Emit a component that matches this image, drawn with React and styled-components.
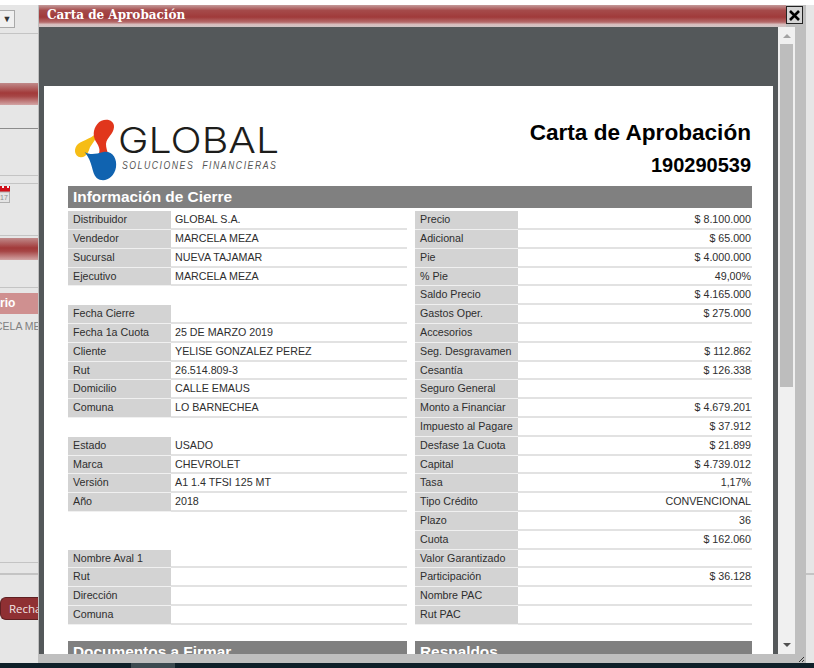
import React from 'react';
import styled, { createGlobalStyle } from 'styled-components';

const GlobalStyle = createGlobalStyle`
    html, body, #root {
        margin: 0;
        padding: 0;
        height: 100%;
        overflow: hidden;
    }
    body {
        font-family: "Liberation Sans", Arial, sans-serif;
        background: #ffffff;
    }
`;

const leftRows = [
    ['Distribuidor', 'GLOBAL S.A.'],
    ['Vendedor', 'MARCELA MEZA'],
    ['Sucursal', 'NUEVA TAJAMAR'],
    ['Ejecutivo', 'MARCELA MEZA'],
    null,
    ['Fecha Cierre', ''],
    ['Fecha 1a Cuota', '25 DE MARZO 2019'],
    ['Cliente', 'YELISE GONZALEZ PEREZ'],
    ['Rut', '26.514.809-3'],
    ['Domicilio', 'CALLE EMAUS'],
    ['Comuna', 'LO BARNECHEA'],
    null,
    ['Estado', 'USADO'],
    ['Marca', 'CHEVROLET'],
    ['Versión', 'A1 1.4 TFSI 125 MT'],
    ['Año', '2018'],
    null,
    null,
    ['Nombre Aval 1', ''],
    ['Rut', ''],
    ['Dirección', ''],
    ['Comuna', ''],
];

const rightRows = [
    ['Precio', '$ 8.100.000'],
    ['Adicional', '$ 65.000'],
    ['Pie', '$ 4.000.000'],
    ['% Pie', '49,00%'],
    ['Saldo Precio', '$ 4.165.000'],
    ['Gastos Oper.', '$ 275.000'],
    ['Accesorios', ''],
    ['Seg. Desgravamen', '$ 112.862'],
    ['Cesantía', '$ 126.338'],
    ['Seguro General', ''],
    ['Monto a Financiar', '$ 4.679.201'],
    ['Impuesto al Pagare', '$ 37.912'],
    ['Desfase 1a Cuota', '$ 21.899'],
    ['Capital', '$ 4.739.012'],
    ['Tasa', '1,17%'],
    ['Tipo Crédito', 'CONVENCIONAL'],
    ['Plazo', '36'],
    ['Cuota', '$ 162.060'],
    ['Valor Garantizado', ''],
    ['Participación', '$ 36.128'],
    ['Nombre PAC', ''],
    ['Rut PAC', ''],
];

function GlobalLogo() {
    return (
        <LogoMark viewBox="0 0 180 210">
            <path
                fill="#f6bd16"
                d="M82 52 C72 72 40 78 24 90 C10 102 12 128 32 130 C50 131 56 112 60 100 L76 76 Z"
            />
            <path
                fill="#e1361c"
                d="M82 30 C98 10 134 14 132 40 C130 62 110 70 108 90 C108 102 112 110 114 120 L86 120 C92 108 86 96 80 86 C68 68 68 48 82 30 Z"
            />
            <path
                fill="#1063b0"
                d="M44 114 C60 124 78 120 100 114 C128 110 142 135 138 160 C132 195 100 208 80 192 C64 176 70 146 44 114 Z"
            />
        </LogoMark>
    );
}

function DataRow({ row, right }) {
    if (!row) {
        return <BlankRow />;
    }

    return (
        <Row>
            <RowLabel>{row[0]}</RowLabel>
            <RowValue right={right}>{row[1]}</RowValue>
        </Row>
    );
}

export default function App() {
    return (
        <Screen>
            <GlobalStyle />
            <TopStrip />

            <BackPanel>
                <SelectBox>▼</SelectBox>
                <PanelLine gap="5px" />
                <RedBand gap="49px" />
                <PanelLine gap="23px" dark />
                <PanelLine gap="46px" />
                <PanelLine gap="7px" />
                <CalendarIcon viewBox="0 0 10 17">
                    <rect x="-3" y="0" width="13" height="6" fill="#d0101a" />
                    <rect x="2" y="0" width="2" height="2" fill="#f4f4f4" />
                    <rect x="7" y="0" width="2" height="2" fill="#f4f4f4" />
                    <rect x="-3" y="6" width="12.5" height="10.5" fill="#e4e4e4" stroke="#b0b0b0" />
                    <text x="0" y="14" fontSize="7" fill="#8c8c8c" fontFamily="Liberation Sans">17</text>
                </CalendarIcon>
                <PanelLine gap="32px" />
                <RedBand gap="2px" />
                <PanelLine gap="27px" />
                <PinkBand>rio</PinkBand>
                <PanelText>CELA ME</PanelText>
                <PanelLine gap="229px" />
                <PanelLine gap="10px" thick />
                <RejectButton>Recha</RejectButton>
            </BackPanel>

            <Dialog>
                <TitleRow>
                    <TitleBar>Carta de Aprobación</TitleBar>
                    <CloseButton>
                        <svg width="13" height="13" viewBox="0 0 13 13">
                            <path d="M2 2 L11 11 M11 2 L2 11" stroke="#000" strokeWidth="2.6" />
                        </svg>
                    </CloseButton>
                </TitleRow>

                <DialogBody>
                    <Viewer>
                        <Paper>
                            <PaperHead>
                                <LogoBlock>
                                    <GlobalLogo />
                                    <LogoWords>
                                        <LogoName>GLOBAL</LogoName>
                                        <LogoTag>SOLUCIONES  FINANCIERAS</LogoTag>
                                    </LogoWords>
                                </LogoBlock>
                                <HeadTitles>
                                    <DocTitle>Carta de Aprobación</DocTitle>
                                    <DocNumber>190290539</DocNumber>
                                </HeadTitles>
                            </PaperHead>

                            <SectionHead>Información de Cierre</SectionHead>
                            <Columns>
                                <Column>
                                    {leftRows.map((row, i) => (
                                        <DataRow key={i} row={row} />
                                    ))}
                                </Column>
                                <Column>
                                    {rightRows.map((row, i) => (
                                        <DataRow key={i} row={row} right />
                                    ))}
                                </Column>
                            </Columns>

                            <BottomColumns>
                                <SectionHead>Documentos a Firmar</SectionHead>
                                <SectionHead>Respaldos</SectionHead>
                            </BottomColumns>
                        </Paper>
                    </Viewer>

                    <ScrollBar>
                        <ScrollArrow up />
                        <ScrollTrack>
                            <ScrollThumb />
                        </ScrollTrack>
                        <ScrollArrow />
                    </ScrollBar>
                </DialogBody>

                <DialogFoot>
                    <svg width="7" height="7" viewBox="0 0 7 7">
                        <path d="M6 1 L1 6 M6 4 L4 6" stroke="#333" strokeWidth="1" />
                    </svg>
                </DialogFoot>
            </Dialog>

            <BackEdge>
                <PanelLine gap="568px" thick />
            </BackEdge>

            <TaskBar>
                <TaskItem />
            </TaskBar>
        </Screen>
    );
}

const Screen = styled.div`
    width: 814px;
    height: 668px;
    display: grid;
    grid-template-columns: 38px 768px 8px;
    grid-template-rows: 5px 658px 5px;
    overflow: hidden;
`;

const TopStrip = styled.div`
    grid-column: 1 / 4;
    background: #ffffff;
`;

const BackPanel = styled.div`
    background: #e6e6e6;
    display: flex;
    flex-direction: column;
    overflow: hidden;
`;

const BackEdge = styled.div`
    background: #e6e6e6;
    display: flex;
    flex-direction: column;
`;

const SelectBox = styled.div`
    margin-top: 5px;
    width: 15px;
    height: 18px;
    box-sizing: border-box;
    background: #f0f0f0;
    border: 1px solid #a9a9a9;
    border-left: none;
    color: #333333;
    font-size: 9px;
    line-height: 16px;
    text-align: center;
`;

const PanelLine = styled.div`
    margin-top: ${({ gap }) => gap};
    flex-shrink: 0;
    height: ${({ thick }) => (thick ? '2px' : '1px')};
    background: ${({ dark }) => (dark ? '#8c8c8c' : '#c4c4c4')};
`;

const RedBand = styled.div`
    margin-top: ${({ gap }) => gap};
    flex-shrink: 0;
    height: 22px;
    background: linear-gradient(#c08a8a 0%, #a23a3a 45%, #a64545 60%, #d3a5a5 100%);
`;

const CalendarIcon = styled.svg`
    margin-top: 2px;
    width: 10px;
    height: 17px;
    flex-shrink: 0;
`;

const PinkBand = styled.div`
    margin-top: 5px;
    flex-shrink: 0;
    height: 21px;
    background: #cf9090;
    color: #ffffff;
    font-size: 12px;
    font-weight: bold;
    line-height: 21px;
`;

const PanelText = styled.div`
    margin-top: 5px;
    margin-left: -5px;
    color: #808080;
    font-size: 10.5px;
    line-height: 14px;
    white-space: nowrap;
`;

const RejectButton = styled.div`
    margin-top: 22px;
    flex-shrink: 0;
    height: 23px;
    box-sizing: border-box;
    padding-left: 8px;
    background: #8f3033;
    border: 1px solid #5e2022;
    border-right: none;
    border-radius: 6px 0 0 6px;
    color: #f2e4e4;
    font-family: "Open Sans", sans-serif;
    font-size: 11.5px;
    line-height: 21px;
    white-space: nowrap;
    overflow: hidden;
`;

const Dialog = styled.div`
    background: #bfbfbf;
    display: flex;
    flex-direction: column;
    min-height: 0;
`;

const TitleRow = styled.div`
    height: 22px;
    flex-shrink: 0;
    position: relative;
    display: flex;
`;

const TitleBar = styled.div`
    flex: 1;
    margin-left: 1px;
    margin-right: 20px;
    padding-left: 8px;
    background: linear-gradient(#c49a9a 0%, #a54a4a 25%, #a03a3a 55%, #b56a6a 78%, #d8bcbc 88%, #cfc4c4 100%);
    color: #ffffff;
    font-family: "DejaVu Serif", serif;
    font-size: 12px;
    font-weight: bold;
    line-height: 20px;
`;

const CloseButton = styled.div`
    position: absolute;
    top: 1px;
    right: 3px;
    width: 17px;
    height: 18px;
    box-sizing: border-box;
    background: #d4d4d4;
    border: 1px solid #222222;
    display: flex;
    align-items: center;
    justify-content: center;
`;

const DialogBody = styled.div`
    flex: 1;
    min-height: 0;
    display: flex;
    margin-left: 1px;
    margin-right: 11px;
`;

const Viewer = styled.div`
    flex: 1;
    min-width: 0;
    overflow: hidden;
    background: #54585a;
    padding: 59px 5px 0;
`;

const Paper = styled.div`
    background: #ffffff;
    padding: 0 21px 0 24px;
    height: 900px;
    color: #333333;
`;

const PaperHead = styled.div`
    height: 100px;
    display: flex;
    justify-content: space-between;
    padding-right: 1px;
`;

const LogoBlock = styled.div`
    display: flex;
    padding-top: 28px;
    margin-left: 2px;
`;

const LogoMark = styled.svg`
    width: 60px;
    height: 70px;
    flex-shrink: 0;
`;

const LogoWords = styled.div`
    margin-left: -12px;
    margin-top: 8px;
`;

const LogoName = styled.div`
    color: #1d1d1b;
    font-family: Inter, sans-serif;
    font-size: 36px;
    font-weight: 350;
    line-height: 36px;
    transform: scaleX(1.14);
    transform-origin: left center;
`;

const LogoTag = styled.div`
    margin-left: 4px;
    margin-top: 2px;
    color: #555555;
    font-size: 10px;
    font-style: italic;
    line-height: 12px;
    letter-spacing: 1.75px;
    white-space: pre;
    transform: scaleX(0.87);
    transform-origin: left center;
`;

const HeadTitles = styled.div`
    text-align: right;
    color: #000000;
    font-weight: bold;
    padding-top: 34px;
`;

const DocTitle = styled.div`
    font-size: 22.6px;
    line-height: 26px;
`;

const DocNumber = styled.div`
    margin-top: 6px;
    font-size: 20px;
    line-height: 26px;
`;

const SectionHead = styled.div`
    height: 22px;
    padding-left: 5px;
    background: #808080;
    color: #ffffff;
    font-size: 15.4px;
    font-weight: bold;
    line-height: 22px;
`;

const Columns = styled.div`
    margin-top: 3.3px;
    display: grid;
    grid-template-columns: 339px 337px;
    column-gap: 8px;
`;

const Column = styled.div`
    display: flex;
    flex-direction: column;
`;

const BlankRow = styled.div`
    height: 18.8px;
`;

const Row = styled.div`
    height: 18.8px;
    box-sizing: border-box;
    display: flex;
    font-size: 10.7px;
    line-height: 17.5px;
`;

const RowLabel = styled.div`
    width: 103px;
    flex-shrink: 0;
    box-sizing: border-box;
    padding-left: 5px;
    background: #d3d3d3;
    border-bottom: 1px solid #f0f0f0;
    color: #2e2e2e;
`;

const RowValue = styled.div`
    flex: 1;
    padding: ${({ right }) => (right ? '0 1px 0 0' : '0 0 0 4px')};
    text-align: ${({ right }) => (right ? 'right' : 'left')};
    border-bottom: 2px solid #e2e2e2;
    color: #2e2e2e;
`;

const BottomColumns = styled(Columns)`
    margin-top: 16px;
`;

const ScrollBar = styled.div`
    width: 17px;
    flex-shrink: 0;
    background: #f0f0f0;
    display: flex;
    flex-direction: column;
    align-items: center;
`;

const ScrollArrow = styled.div`
    height: ${({ up }) => (up ? '10px' : '11px')};
    flex-shrink: 0;
    width: 0;
    margin-top: ${({ up }) => (up ? '7px' : '0')};
    &::before {
        content: '';
        display: block;
        margin-left: -4px;
        width: 0;
        height: 0;
        border-left: 4px solid transparent;
        border-right: 4px solid transparent;
        ${({ up }) =>
            up
                ? 'border-bottom: 4px solid #a3a3a3;'
                : 'border-top: 4px solid #505050;'}
    }
`;

const ScrollTrack = styled.div`
    flex: 1;
    width: 13px;
`;

const ScrollThumb = styled.div`
    height: 343px;
    background: #bdbdbd;
`;

const DialogFoot = styled.div`
    height: 9px;
    flex-shrink: 0;
    display: flex;
    justify-content: flex-end;
    align-items: flex-end;
    padding-right: 1px;
`;

const TaskBar = styled.div`
    grid-column: 1 / 4;
    background: #0f2029;
    padding-left: 131px;
`;

const TaskItem = styled.div`
    width: 44px;
    height: 5px;
    background: #3c4a50;
`;
